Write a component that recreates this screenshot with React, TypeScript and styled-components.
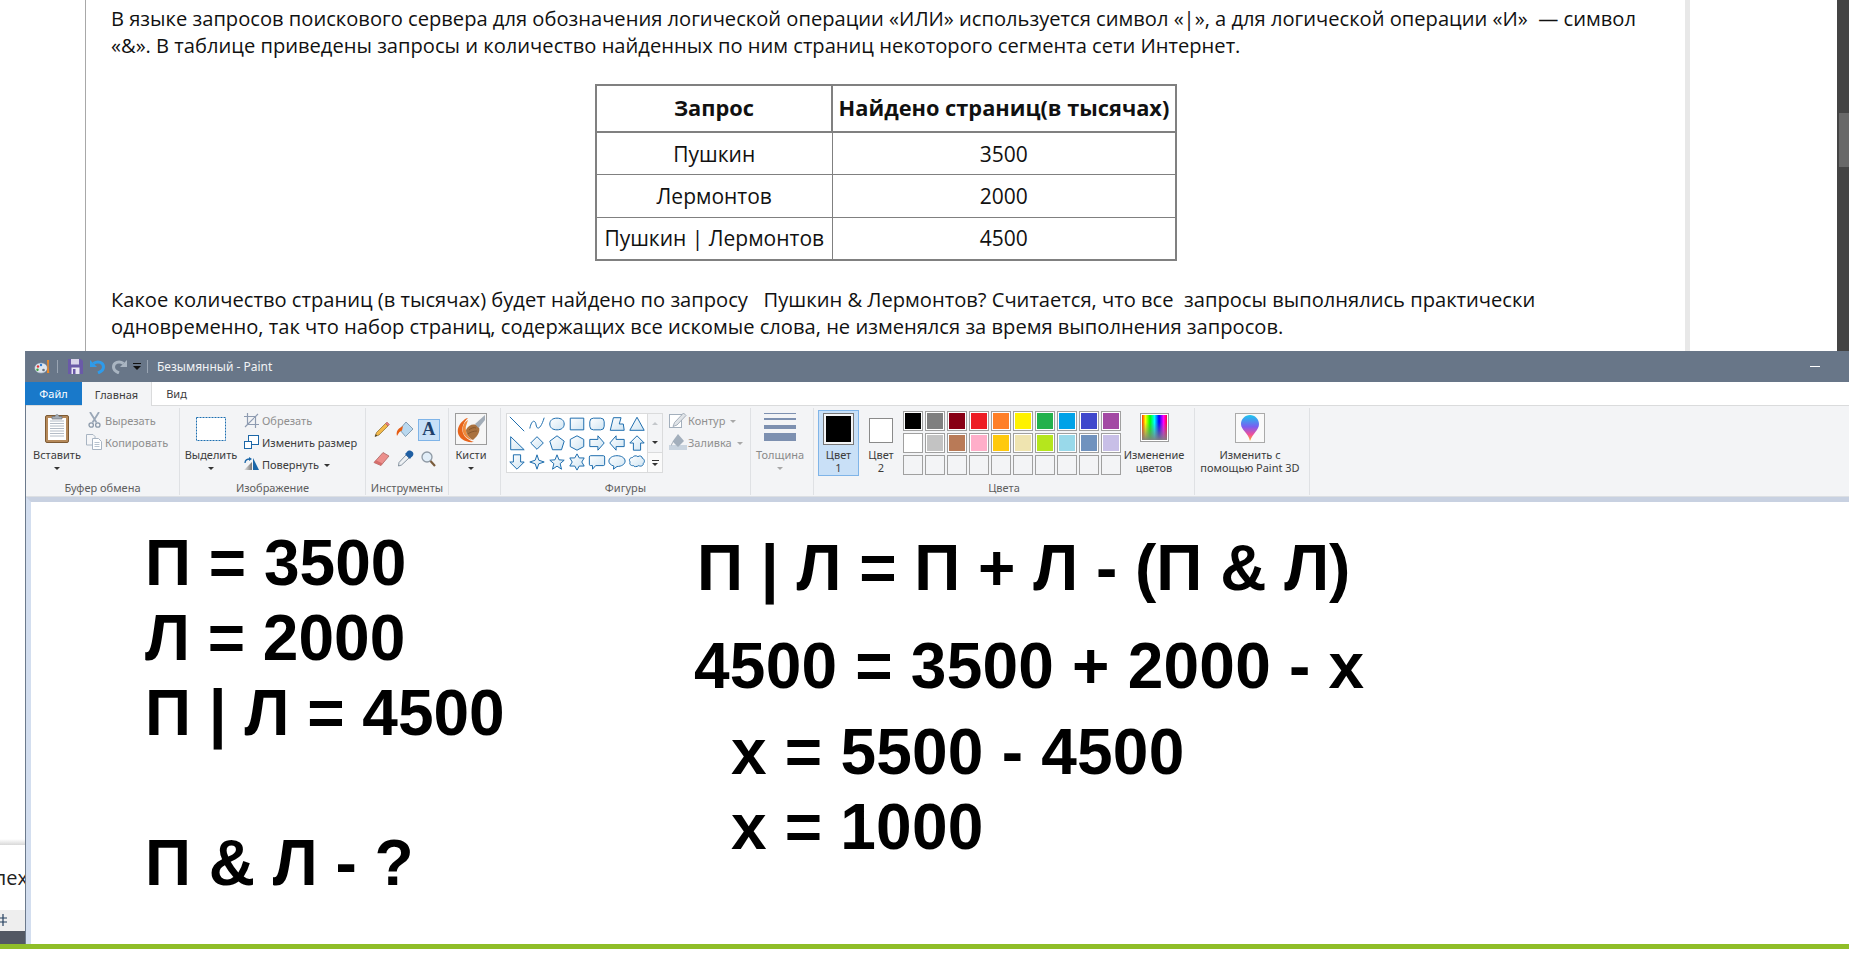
import React from 'react'
import styled, {createGlobalStyle} from 'styled-components'

const Global = createGlobalStyle`
  html, body {
    margin: 0;
    padding: 0;
    background: #fff;
    overflow: hidden;
  }
  * {
    box-sizing: border-box;
  }
`

const Page = styled.div`
  width: 1849px;
  height: 966px;
  display: flex;
  flex-direction: column;
  overflow: hidden;
  background: #fff;
`

const Browser = styled.div`
  height: 351px;
  display: flex;
  flex: none;
`
const Gutter = styled.div`
  width: 85px;
  flex: none;
`
const Article = styled.article`
  width: 1605px;
  flex: none;
  padding: 5px 0 0 25px;
  border-left: 1px solid #d4d4d4;
  border-right: 5px solid;
  border-image: linear-gradient(90deg, #a8a8a8 0 40%, #e8e8e8 100%) 1;
  font-family: "Open Sans", "Noto Sans", sans-serif;
  font-size: 20.14px;
  color: #111;
`
const Para = styled.p`
  margin: 0;
  line-height: 27px;
  white-space: pre;
`
const Spacer = styled.div`
  flex: 1;
`
const Scrollbar = styled.div`
  width: 12px;
  flex: none;
  background: #444;
  padding: 113px 0 0 2px;
`
const Thumb = styled.div`
  height: 54px;
  background: #686868;
`

const Table = styled.table`
  margin: 25px 0 25px 484px;
  width: 580px;
  border-collapse: collapse;
  border: 2px solid #808080;
  table-layout: fixed;
  text-align: center;
  font-size: 21px;
`
const HeadCell = styled.th`
  height: 47px;
  padding: 0 0 2px;
  border: 2px solid #808080;
  font-size: 21.8px;
  font-weight: 700;
  white-space: nowrap;
`
const Cell = styled.td`
  height: 42.5px;
  padding: 0;
  border: 1px solid #808080;
  white-space: nowrap;
`

const Lower = styled.div`
  height: 593px;
  display: flex;
  flex: none;
`
const Behind = styled.div`
  width: 25px;
  flex: none;
  display: flex;
  flex-direction: column;
  overflow: hidden;
`
const BehindTop = styled.div`
  height: 494px;
  flex: none;
  background: linear-gradient(#fff 0 488px, #d8d8d8 494px);
`
const BehindText = styled.div`
  width: 28px;
  height: 65px;
  flex: none;
  font-family: "Open Sans", sans-serif;
  font-size: 20px;
  line-height: 66px;
  color: #222;
  direction: rtl;
  overflow: hidden;
`
const BehindBar = styled.div`
  height: 21px;
  flex: none;
  background: #eee;
  color: #25405f;
  font-size: 0;
  line-height: 0;
`
const BehindDark = styled.div`
  flex: 1;
  background: #525863;
`

const Paint = styled.section`
  flex: 1;
  display: flex;
  flex-direction: column;
  border-left: 1px solid #6c7a8c;
  font-family: "Noto Sans", "Open Sans", sans-serif;
  min-width: 0;
`
const TitleBar = styled.div`
  height: 31px;
  flex: none;
  display: flex;
  align-items: center;
  background: #687688;
  padding-left: 8px;
  color: #f1f3f5;
  font-size: 12px;
`
const TitleIcon = styled.span<{ $ml?: number }>`
  display: inline-flex;
  flex: none;
  margin-left: ${p => p.$ml ?? 0}px;
`
const TitleSep = styled.span<{ $ml: number }>`
  width: 1px;
  height: 13px;
  margin-left: ${p => p.$ml}px;
  background: #9aa5b3;
`
const TitleText = styled.span`
  margin-left: 9px;
  flex: 1;
`
const Minimize = styled.span`
  width: 10px;
  height: 1px;
  margin-right: 29px;
  background: #fff;
`

const Tabs = styled.div`
  height: 23px;
  flex: none;
  display: flex;
  background: #fff;
  font-size: 11px;
`
const FileTab = styled.div`
  width: 57px;
  margin-left: -1px;
  display: flex;
  align-items: center;
  justify-content: center;
  background: #1979ca;
  color: #fff;
`
const Tab = styled.div<{ $w: number; $active?: boolean }>`
  width: ${p => p.$w}px;
  display: flex;
  align-items: center;
  justify-content: center;
  color: #3c3c3c;
  margin-bottom: ${p => (p.$active ? -1 : 0)}px;
  background: ${p => (p.$active ? '#f3f4f6' : 'transparent')};
  border-right: 1px solid ${p => (p.$active ? '#dadbdc' : 'transparent')};
  position: relative;
`

const Ribbon = styled.div`
  height: 92px;
  flex: none;
  display: flex;
  align-items: flex-start;
  padding-top: 2px;
  background: #f3f4f6;
  border-top: 1px solid #dadbdc;
  border-bottom: 1px solid #dcdfe3;
  font-size: 11px;
  color: #3c3c3c;
`
const Group = styled.div<{ $w: number }>`
  width: ${p => p.$w}px;
  height: 87px;
  flex: none;
  display: flex;
  flex-direction: column;
  border-right: 1px solid #dfe1e4;
`
const GroupBody = styled.div`
  flex: 1;
  display: flex;
  align-items: flex-start;
`
const GroupLabel = styled.div`
  height: 15px;
  text-align: center;
  line-height: 16px;
  color: #5e5e5e;
  white-space: nowrap;
`

const Large = styled.div<{ $w: number; $ml?: number; $muted?: boolean }>`
  width: ${p => p.$w}px;
  margin: 5px 0 0 ${p => p.$ml ?? 0}px;
  flex: none;
  display: flex;
  flex-direction: column;
  align-items: center;
  color: ${p => (p.$muted ? '#8a8a8a' : 'inherit')};
`
const LargeIcon = styled.div`
  height: 34px;
  display: flex;
  align-items: flex-start;
  justify-content: center;
`
const LargeText = styled.div`
  margin-top: 1px;
  line-height: 13px;
  text-align: center;
  white-space: nowrap;
`
const Caret = styled.span<{ $muted?: boolean }>`
  display: block;
  width: 0;
  height: 0;
  margin: 6px auto 0;
  border: 3px solid transparent;
  border-bottom: 0;
  border-top-color: ${p => (p.$muted ? '#a8a8a8' : '#333')};
`
const InlineCaret = styled(Caret)`
  display: inline-block;
  margin: 0 0 0 5px;
  vertical-align: middle;
`

const Stack = styled.div<{ $ml: number }>`
  margin: 1px 0 0 ${p => p.$ml}px;
  flex: none;
`
const SmallRow = styled.div<{ $muted?: boolean; $gap?: number }>`
  height: 22px;
  display: flex;
  align-items: center;
  gap: ${p => p.$gap ?? 3}px;
  color: ${p => (p.$muted ? '#8f8f8f' : 'inherit')};
  white-space: nowrap;
`

const ToolGrid = styled.div`
  display: grid;
  grid-template-columns: repeat(3, 23.5px);
  grid-auto-rows: 29px;
  margin: 7px 0 0 4px;
  place-items: center;
`
const TextTool = styled.div`
  width: 22px;
  height: 22px;
  display: flex;
  align-items: center;
  justify-content: center;
  background: #c9e0f7;
  border: 1px solid #7fb4e8;
  font-family: "Liberation Serif", serif;
  font-weight: 700;
  font-size: 18px;
  color: #1d3f6b;
`

const Gallery = styled.div`
  width: 157px;
  height: 60px;
  margin: 5px 0 0 5px;
  flex: none;
  display: flex;
  background: #fff;
  border: 1px solid #dadbdc;
`
const ShapeGrid = styled.div`
  flex: 1;
  display: grid;
  grid-template-columns: repeat(7, 1fr);
  grid-auto-rows: 1fr;
  place-items: center;
`
const GalleryScroll = styled.div`
  width: 15px;
  flex: none;
  display: flex;
  flex-direction: column;
  background: #f3f4f6;
  border-left: 1px solid #dadbdc;
`
const ScrollStep = styled.div<{ $color: string; $up?: boolean }>`
  flex: 1;
  display: flex;
  align-items: center;
  justify-content: center;
  &::after {
    content: '';
    border: 3px solid transparent;
    ${p => (p.$up ? `border-top: 0; border-bottom-color: ${p.$color};` : `border-bottom: 0; border-top-color: ${p.$color};`)}
  }
`
const ScrollMore = styled.div`
  flex: 1;
  display: flex;
  flex-direction: column;
  align-items: center;
  justify-content: center;
  gap: 2px;
  background: #fafafa;
  border-top: 1px solid #dadbdc;
  &::before {
    content: '';
    width: 7px;
    height: 1px;
    background: #333;
  }
  &::after {
    content: '';
    border: 3px solid transparent;
    border-bottom: 0;
    border-top-color: #333;
  }
`

const ColorButton = styled.div<{ $w: number; $ml: number; $active?: boolean }>`
  width: ${p => p.$w}px;
  height: 66px;
  margin: 2px 0 0 ${p => p.$ml}px;
  flex: none;
  display: flex;
  flex-direction: column;
  align-items: center;
  padding-top: ${p => (p.$active ? 2 : 7)}px;
  background: ${p => (p.$active ? '#c9e0f7' : 'transparent')};
  border: 1px solid ${p => (p.$active ? '#7fb4e8' : 'transparent')};
`
const BigSwatch = styled.div<{ $size: number; $h: number; $color: string }>`
  width: ${p => p.$size}px;
  height: ${p => p.$h}px;
  background: ${p => p.$color};
  border: ${p => (p.$color === '#000' ? '1px solid #777' : '1px solid #8a8a8a')};
  box-shadow: ${p => (p.$color === '#000' ? 'inset 0 0 0 2px #f3f4f6' : 'none')};
`
const ColorLabel = styled.div<{ $mt: number }>`
  margin-top: ${p => p.$mt}px;
  line-height: 13px;
  text-align: center;
`
const Palette = styled.div`
  display: grid;
  grid-template-columns: repeat(10, 20px);
  grid-auto-rows: 20px;
  gap: 2px;
  margin: 3px 0 0 2px;
  flex: none;
`
const PaletteCell = styled.div<{ $color?: string }>`
  border: 1px solid #a0a0a0;
  background: ${p => p.$color ?? 'transparent'};
  box-shadow: ${p => (p.$color ? 'inset 0 0 0 1px #fff' : 'none')};
`
const Spectrum = styled.div`
  width: 29px;
  height: 29px;
  border: 1px solid #9d9d9d;
  box-shadow: inset 0 0 0 1px #fff;
  background:
    linear-gradient(rgba(128, 128, 128, 0) 30%, #808080 100%),
    linear-gradient(90deg, #f00, #ff0, #0f0, #0ff, #00f, #f0f, #f00);
`
const Frame3D = styled.div`
  width: 30px;
  height: 30px;
  display: flex;
  align-items: center;
  justify-content: center;
  background: #fafafa;
  border: 1px solid #aaa;
`

const CanvasArea = styled.div`
  flex: 1;
  position: relative;
  background: #fff;
  border-top: 5px solid #c8d1e1;
  border-left: 5px solid #d3deef;
  overflow: hidden;
`
const Ink = styled.div<{ $x: number; $y: number; $spacing?: number }>`
  position: absolute;
  left: ${p => p.$x}px;
  top: ${p => p.$y}px;
  font-family: "Liberation Sans", Arial, sans-serif;
  font-weight: 700;
  font-size: 64px;
  line-height: 64px;
  letter-spacing: ${p => p.$spacing ?? 0}px;
  color: #000;
  white-space: pre;
`

const GreenBar = styled.div`
  height: 5px;
  flex: none;
  background: #8fbe28;
`

const shapePaths = [
  'M2 2L18 18',
  'M2 15C4 5 8 5 9 11S14 16 18 3',
  'M10 3.5C15 3.5 18 6 18 10S15 16.5 10 16.5 2 14 2 10 5 3.5 10 3.5Z',
  'M2.5 3.5H17.5V16.5H2.5Z',
  'M6 3.5H14Q18 3.5 18 7.5V12.5Q18 16.5 14 16.5H6Q2 16.5 2 12.5V7.5Q2 3.5 6 3.5Z',
  'M2.5 17L6 3H14.5L12.5 10H17L18 17Z',
  'M10 2.5L18 17H2Z',
  'M3 3L18 17.5H3Z',
  'M10 3L17 10L10 17L3 10Z',
  'M10 2L18 8L15 17.5H5L2 8Z',
  'M10 2L17.5 6V14L10 18L2.5 14V6Z',
  'M2 6H11V2L18 10L11 18V14H2Z',
  'M18 6H9V2L2 10L9 18V14H18Z',
  'M10 2L18 10H14V18H6V10H2Z',
  'M6 2H14V10H18L10 18L2 10H6Z',
  'M10 2L12 8L18 10L12 12L10 18L8 12L2 10L8 8Z',
  'M10 2L12.2 7.6L18 8L13.5 11.8L15 18L10 14.6L5 18L6.5 11.8L2 8L7.8 7.6Z',
  'M10 1L12.5 5.5H18L15.3 10L18 14.5H12.5L10 19L7.5 14.5H2L4.7 10L2 5.5H7.5Z',
  'M3 3H17Q18.5 3 18.5 4.5V12.5Q18.5 14 17 14H8.5L5 18V14H3Q1.5 14 1.5 12.5V4.5Q1.5 3 3 3Z',
  'M10 3C15 3 19 5.5 19 9S15 15 10 15L6 18L6.5 14.5C3 13.5 1 11.5 1 9C1 5.5 5 3 10 3Z',
  'M5 5C6 3 9 2.5 11 4C13 2.5 16 3.5 16 6C18.5 6.5 19 10 17 11.5C17.5 14 14 15.5 12 14C10 15.5 6.5 15.5 6 14C3 14.5 1 12 2.5 10C0.5 8 2 5 5 5Z',
]

const row1 = ['#000', '#7f7f7f', '#880015', '#ed1c24', '#ff7f27', '#fff200', '#22b14c', '#00a2e8', '#3f48cc', '#a349a4']
const row2 = ['#fff', '#c3c3c3', '#b97a57', '#ffaec9', '#ffc90e', '#efe4b0', '#b5e61d', '#99d9ea', '#7092be', '#c8bfe7']

const AppIcon = () => (
  <svg width="17" height="15" viewBox="0 0 17 15">
    <ellipse cx="7" cy="9" rx="6.5" ry="5.2" fill="#dfe6ee" stroke="#6d7f93" strokeWidth=".6"/>
    <circle cx="4" cy="7.5" r="1.2" fill="#d33"/>
    <circle cx="7" cy="6" r="1.2" fill="#2f7bd1"/>
    <circle cx="3.5" cy="10.8" r="1.2" fill="#3ca33c"/>
    <circle cx="9.5" cy="11" r="1.3" fill="#67717c"/>
    <path d="M13 1h2l-.3 7 .6 6h-2.4l.5-6z" fill="#e98a2c"/>
  </svg>
)
const SaveIcon = () => (
  <svg width="15" height="15" viewBox="0 0 15 15">
    <path d="M0 0H13L15 2V15H0Z" fill="#6a5aa8"/>
    <path d="M3 0H11V5.5H3Z" fill="#d8d4ea"/>
    <path d="M3.5 8.5H11.5V15H3.5Z" fill="#e9e7f3"/>
    <path d="M5 10H7.5V15H5Z" fill="#6a5aa8"/>
  </svg>
)
const UndoIcon = ({color, flip}: { color: string; flip?: boolean }) => (
  <svg width="15" height="15" viewBox="0 0 15 15" style={flip ? {transform: 'scaleX(-1)'} : undefined}>
    <path d="M0 1V8H7Z" fill={color}/>
    <path d="M3.5 4.5C8 1.5 13.5 3.5 13.5 8C13.5 10.5 11.5 12.5 8 14" fill="none" stroke={color} strokeWidth="3"/>
  </svg>
)
const CustomizeIcon = () => (
  <svg width="8" height="7" viewBox="0 0 8 7">
    <path d="M0 0H8V1H0Z" fill="#111"/>
    <path d="M0 3H8L4 7Z" fill="#111"/>
  </svg>
)
const PasteIcon = () => (
  <svg width="24" height="30" viewBox="0 0 24 30">
    <rect x=".5" y="2.5" width="23" height="27" rx="1.5" fill="#b5895a" stroke="#7d5a34"/>
    <rect x="3" y="5" width="18" height="22" fill="#fff"/>
    <path d="M5 8H19M5 10.5H19M5 13H19M5 15.5H19M5 18H19M5 20.5H19M5 23H19" stroke="#b4bcc6" strokeWidth="1"/>
    <path d="M7 6V3.5H10C10 1 14 1 14 3.5H17V6Z" fill="#a6adb5" stroke="#6d747b" strokeWidth=".7"/>
  </svg>
)
const CutIcon = () => (
  <svg width="13" height="16" viewBox="0 0 13 16">
    <path d="M2 0L8.5 10.5M11 0L4.5 10.5" stroke="#9aa7b7" strokeWidth="1.8"/>
    <circle cx="3.2" cy="13" r="2.2" fill="none" stroke="#8c9aab" strokeWidth="1.3"/>
    <circle cx="9.8" cy="13" r="2.2" fill="none" stroke="#8c9aab" strokeWidth="1.3"/>
  </svg>
)
const CopyIcon = () => (
  <svg width="16" height="16" viewBox="0 0 16 16">
    <path d="M.5 .5H7L9 2.5V11H.5Z" fill="#f5f6f8" stroke="#a8b4c2"/>
    <path d="M6.5 4.5H12.5L15.5 7.5V15.5H6.5Z" fill="#fff" stroke="#a8b4c2"/>
    <path d="M8.5 8.5H13.5M8.5 10.5H13.5M8.5 12.5H13.5" stroke="#b8c3cf"/>
  </svg>
)
const SelectIcon = () => (
  <svg width="30" height="24" viewBox="0 0 30 24" style={{marginTop: 4}}>
    <rect x=".5" y=".5" width="29" height="23" fill="#fff" stroke="#1d6fb0" strokeDasharray="2 1"/>
  </svg>
)
const CropIcon = () => (
  <svg width="15" height="15" viewBox="0 0 15 15">
    <path d="M3.5 0V11.5H15M0 3.5H11.5V15M1 14L14 1" fill="none" stroke="#8e9bb1" strokeWidth="1.2"/>
  </svg>
)
const ResizeIcon = () => (
  <svg width="15" height="14" viewBox="0 0 15 14">
    <rect x="4.5" y=".5" width="10" height="9" fill="#fff" stroke="#1c67a8"/>
    <rect x=".5" y="6.5" width="7" height="7" fill="#fff" stroke="#1c67a8"/>
  </svg>
)
const RotateIcon = () => (
  <svg width="15" height="14" viewBox="0 0 15 14">
    <defs>
      <linearGradient id="rot" x1="0" x2="1" y1="0" y2="0">
        <stop offset="0" stopColor="#e8e8e8"/>
        <stop offset="1" stopColor="#777"/>
      </linearGradient>
    </defs>
    <path d="M0 13L8 5V13Z" fill="url(#rot)"/>
    <path d="M9 1L15 13H9Z" fill="#1c67a8"/>
    <path d="M1 6C1 3 3 2 6 2" fill="none" stroke="#1c67a8" strokeWidth="1.3"/>
    <path d="M5 0L8 2L5 4Z" fill="#1c67a8"/>
  </svg>
)
const PencilIcon = () => (
  <svg width="16" height="15" viewBox="0 0 16 15">
    <path d="M11.5 1.5L14 4L5 13L1 14.5L2.5 10.5Z" fill="#f2b84a" stroke="#8a6a2c" strokeWidth=".7"/>
    <path d="M11.5 1.5L13 0L15.5 2.5L14 4Z" fill="#e57f7f" stroke="#a55" strokeWidth=".5"/>
    <path d="M1 14.5L1.8 12.3L3.2 13.7Z" fill="#333"/>
  </svg>
)
const BucketIcon = () => (
  <svg width="18" height="17" viewBox="0 0 18 17">
    <path d="M10 1L17 8L9.5 15.5L3.5 8.5Z" fill="#b9d8ef" stroke="#6f8aa2" strokeWidth=".8"/>
    <path d="M7 5L3 7.5C1 9 0 12 1 15C2.5 12 4 10 6 9.5Z" fill="#e65c12"/>
  </svg>
)
const EraserIcon = () => (
  <svg width="17" height="16" viewBox="0 0 17 16">
    <path d="M10 1.5L16 5L8 14.5L1 11.5Z" fill="#ec8f8c" stroke="#a96663" strokeWidth=".8"/>
    <path d="M1 11.5L8 14.5L9.5 12.5L3 9.3Z" fill="#d56e6b"/>
  </svg>
)
const DropperIcon = () => (
  <svg width="17" height="17" viewBox="0 0 17 17">
    <path d="M9 5L12 8L4.5 15L1.5 16L2 12.5Z" fill="#eef1f4" stroke="#6a7a8a" strokeWidth=".8"/>
    <path d="M8 4L13 9L14 7.5C17 6 17 2.5 15 1.5C13.5 0 11 0 9.5 2.5Z" fill="#1f5fa3"/>
  </svg>
)
const GlassIcon = () => (
  <svg width="15" height="16" viewBox="0 0 15 16">
    <circle cx="6" cy="6" r="5" fill="#e2eef8" stroke="#8f9aa5" strokeWidth="1.3"/>
    <path d="M9.5 10L14 15" stroke="#7a5c3c" strokeWidth="2.2"/>
  </svg>
)
const BrushIcon = () => (
  <svg width="32" height="32" viewBox="0 0 32 32">
    <rect x=".5" y=".5" width="31" height="31" fill="#f6f6f6" stroke="#9c9c9c"/>
    <path d="M13 5C11 5 10 6 9 7C5 10 2 15 3 20C4 25 10 30 19 29C13 27 8 23 7.5 18C7 13 9 9 13 5Z" fill="#e8641b"/>
    <path d="M13 7C9 9 7 14 8 19C9 23 13 26 17 27C12 23 10 18 11 13Z" fill="#f08a3c"/>
    <path d="M11 17C13 12 19 10 23 13C26 16 24 22 18 27C14 25 11 21 11 17Z" fill="#a9713e"/>
    <path d="M14 17C16 15 19 14 21 15M13 21C15 19 19 18 22 18" stroke="#7f5128" strokeWidth=".8" fill="none"/>
    <path d="M20 11L30 2V7L23.5 15Z" fill="#a3adb8"/>
  </svg>
)
const OutlineIcon = () => (
  <svg width="18" height="16" viewBox="0 0 18 16">
    <rect x=".5" y="2.5" width="12" height="13" fill="#fff" stroke="#a3afbc"/>
    <path d="M14.5 1L17 3.5L8 13L4 14.5L5.5 10.5Z" fill="#e0e4e8" stroke="#94a0ad" strokeWidth=".8"/>
  </svg>
)
const FillIcon = () => (
  <svg width="18" height="16" viewBox="0 0 18 16">
    <path d="M0 11H18V16H0Z" fill="#c9d4df"/>
    <path d="M9 0L15 7L9 13L3.5 7.5Z" fill="#a3afbc"/>
    <path d="M5 7C3 8 2 10 2.5 12L4 8Z" fill="#7f8c99"/>
  </svg>
)
const WidthIcon = () => (
  <svg width="32" height="28" viewBox="0 0 32 28">
    <path d="M0 0H32V1H0Z" fill="#7d90b0"/>
    <path d="M0 5H32V7H0Z" fill="#7d90b0"/>
    <path d="M0 12H32V16H0Z" fill="#7d90b0"/>
    <path d="M0 20H32V28H0Z" fill="#7d90b0"/>
  </svg>
)
const DropIcon = () => (
  <svg width="18" height="26" viewBox="0 0 18 26">
    <defs>
      <linearGradient id="drop" x1="0" x2="0" y1="0" y2="1">
        <stop offset="0" stopColor="#19c8ee"/>
        <stop offset=".45" stopColor="#7a5ff0"/>
        <stop offset=".75" stopColor="#f0509a"/>
        <stop offset="1" stopColor="#ffb21c"/>
      </linearGradient>
    </defs>
    <path d="M9 0C14 0 18 4 18 9C18 15 12 18 9 26C7.5 18 0 15 0 9C0 4 4 0 9 0Z" fill="url(#drop)"/>
  </svg>
)
const MoveIcon = () => (
  <svg width="8" height="12" viewBox="0 0 8 12" style={{marginTop: 4}}>
    <path d="M3 0V12M0 4H7M0 8H7" stroke="#25405f" strokeWidth="1.2" fill="none"/>
  </svg>
)

const App = () => {
  return (
    <Page>
      <Global/>
      <Browser>
        <Gutter/>
        <Article>
          <Para>{'В языке запросов поискового сервера для обозначения логической операции «ИЛИ» используется символ «|», а для логической операции «И»  — символ\n«&». В таблице приведены запросы и количество найденных по ним страниц некоторого сегмента сети Интернет.'}</Para>
          <Table>
            <colgroup>
              <col width="236"/>
              <col width="344"/>
            </colgroup>
            <thead>
              <tr>
                <HeadCell>Запрос</HeadCell>
                <HeadCell>Найдено страниц(в тысячах)</HeadCell>
              </tr>
            </thead>
            <tbody>
              <tr>
                <Cell>Пушкин</Cell>
                <Cell>3500</Cell>
              </tr>
              <tr>
                <Cell>Лермонтов</Cell>
                <Cell>2000</Cell>
              </tr>
              <tr>
                <Cell>Пушкин | Лермонтов</Cell>
                <Cell>4500</Cell>
              </tr>
            </tbody>
          </Table>
          <Para>{'Какое количество страниц (в тысячах) будет найдено по запросу   Пушкин & Лермонтов? Считается, что все  запросы выполнялись практически\nодновременно, так что набор страниц, содержащих все искомые слова, не изменялся за время выполнения запросов.'}</Para>
        </Article>
        <Spacer/>
        <Scrollbar>
          <Thumb/>
        </Scrollbar>
      </Browser>
      <Lower>
        <Behind>
          <BehindTop/>
          <BehindText>лех</BehindText>
          <BehindBar><MoveIcon/></BehindBar>
          <BehindDark/>
        </Behind>
        <Paint>
          <TitleBar>
            <AppIcon/>
            <TitleSep $ml={6}/>
            <TitleIcon $ml={10}><SaveIcon/></TitleIcon>
            <TitleIcon $ml={7}><UndoIcon color="#2e9bea"/></TitleIcon>
            <TitleIcon $ml={7}><UndoIcon color="#a9b5c2" flip/></TitleIcon>
            <TitleIcon $ml={6}><CustomizeIcon/></TitleIcon>
            <TitleSep $ml={6}/>
            <TitleText>Безымянный - Paint</TitleText>
            <Minimize/>
          </TitleBar>
          <Tabs>
            <FileTab>Файл</FileTab>
            <Tab $w={70} $active>Главная</Tab>
            <Tab $w={50}>Вид</Tab>
          </Tabs>
          <Ribbon>
            <Group $w={154}>
              <GroupBody>
                <Large $w={50} $ml={6}>
                  <LargeIcon><PasteIcon/></LargeIcon>
                  <LargeText>Вставить<Caret/></LargeText>
                </Large>
                <Stack $ml={4}>
                  <SmallRow $muted $gap={4}><TitleIcon $ml={2}><CutIcon/></TitleIcon>Вырезать</SmallRow>
                  <SmallRow $muted><CopyIcon/>Копировать</SmallRow>
                </Stack>
              </GroupBody>
              <GroupLabel>Буфер обмена</GroupLabel>
            </Group>
            <Group $w={186}>
              <GroupBody>
                <Large $w={54} $ml={4}>
                  <LargeIcon><SelectIcon/></LargeIcon>
                  <LargeText>Выделить<Caret/></LargeText>
                </Large>
                <Stack $ml={6}>
                  <SmallRow $muted><CropIcon/>Обрезать</SmallRow>
                  <SmallRow><ResizeIcon/>Изменить размер</SmallRow>
                  <SmallRow><RotateIcon/><span>Повернуть<InlineCaret/></span></SmallRow>
                </Stack>
              </GroupBody>
              <GroupLabel>Изображение</GroupLabel>
            </Group>
            <Group $w={83}>
              <GroupBody>
                <ToolGrid>
                  <PencilIcon/>
                  <BucketIcon/>
                  <TextTool>A</TextTool>
                  <EraserIcon/>
                  <DropperIcon/>
                  <GlassIcon/>
                </ToolGrid>
              </GroupBody>
              <GroupLabel>Инструменты</GroupLabel>
            </Group>
            <Group $w={52}>
              <GroupBody>
                <Large $w={44}>
                  <LargeIcon><BrushIcon/></LargeIcon>
                  <LargeText>Кисти<Caret/></LargeText>
                </Large>
              </GroupBody>
              <GroupLabel/>
            </Group>
            <Group $w={250}>
              <GroupBody>
                <Gallery>
                  <ShapeGrid>
                    {shapePaths.map((d, i) => (
                      <svg key={i} width="18" height="18" viewBox="0 0 20 20">
                        <defs>
                          <linearGradient id={`shape${i}`} x1="0" x2="1" y1="0" y2="1">
                            <stop offset="0" stopColor="#ffffff"/>
                            <stop offset="1" stopColor="#cfe4f2"/>
                          </linearGradient>
                        </defs>
                        <path d={d} fill={i < 2 ? 'none' : `url(#shape${i})`} stroke="#1c6cad" strokeWidth="1.1"/>
                      </svg>
                    ))}
                  </ShapeGrid>
                  <GalleryScroll>
                    <ScrollStep $color="#c4c7cb" $up/>
                    <ScrollStep $color="#333"/>
                    <ScrollMore/>
                  </GalleryScroll>
                </Gallery>
                <Stack $ml={6}>
                  <SmallRow $muted $gap={1}><OutlineIcon/><span>Контур<InlineCaret $muted/></span></SmallRow>
                  <SmallRow $muted $gap={1}><FillIcon/><span>Заливка<InlineCaret $muted/></span></SmallRow>
                </Stack>
              </GroupBody>
              <GroupLabel>Фигуры</GroupLabel>
            </Group>
            <Group $w={63}>
              <GroupBody>
                <Large $w={58} $muted>
                  <LargeIcon><WidthIcon/></LargeIcon>
                  <LargeText>Толщина<Caret $muted/></LargeText>
                </Large>
              </GroupBody>
              <GroupLabel/>
            </Group>
            <Group $w={381}>
              <GroupBody>
                <ColorButton $w={41} $ml={4} $active>
                  <BigSwatch $size={31} $h={32} $color="#000"/>
                  <ColorLabel $mt={3}>Цвет<br/>1</ColorLabel>
                </ColorButton>
                <ColorButton $w={40} $ml={2}>
                  <BigSwatch $size={24} $h={25} $color="#fff"/>
                  <ColorLabel $mt={5}>Цвет<br/>2</ColorLabel>
                </ColorButton>
                <Palette>
                  {row1.map(c => <PaletteCell key={c} $color={c}/>)}
                  {row2.map(c => <PaletteCell key={c} $color={c}/>)}
                  {row1.map(c => <PaletteCell key={c}/>)}
                </Palette>
                <Large $w={64} $ml={1}>
                  <LargeIcon><Spectrum/></LargeIcon>
                  <LargeText>Изменение<br/>цветов</LargeText>
                </Large>
              </GroupBody>
              <GroupLabel>Цвета</GroupLabel>
            </Group>
            <Group $w={115}>
              <GroupBody>
                <Large $w={110}>
                  <LargeIcon><Frame3D><DropIcon/></Frame3D></LargeIcon>
                  <LargeText>Изменить с<br/>помощью Paint 3D</LargeText>
                </Large>
              </GroupBody>
              <GroupLabel/>
            </Group>
          </Ribbon>
          <CanvasArea>
            <Ink $x={114} $y={29}>П = 3500</Ink>
            <Ink $x={114} $y={104}>Л = 2000</Ink>
            <Ink $x={114} $y={179}>П | Л = 4500</Ink>
            <Ink $x={114} $y={329}>П &amp; Л - ?</Ink>
            <Ink $x={666} $y={34}>П | Л = П + Л - (П &amp; Л)</Ink>
            <Ink $x={663} $y={132} $spacing={0.22}>4500 = 3500 + 2000 - х</Ink>
            <Ink $x={700} $y={218} $spacing={0.22}>х = 5500 - 4500</Ink>
            <Ink $x={700} $y={293} $spacing={0.2}>х = 1000</Ink>
          </CanvasArea>
        </Paint>
      </Lower>
      <GreenBar/>
    </Page>
  )
}

export default App
